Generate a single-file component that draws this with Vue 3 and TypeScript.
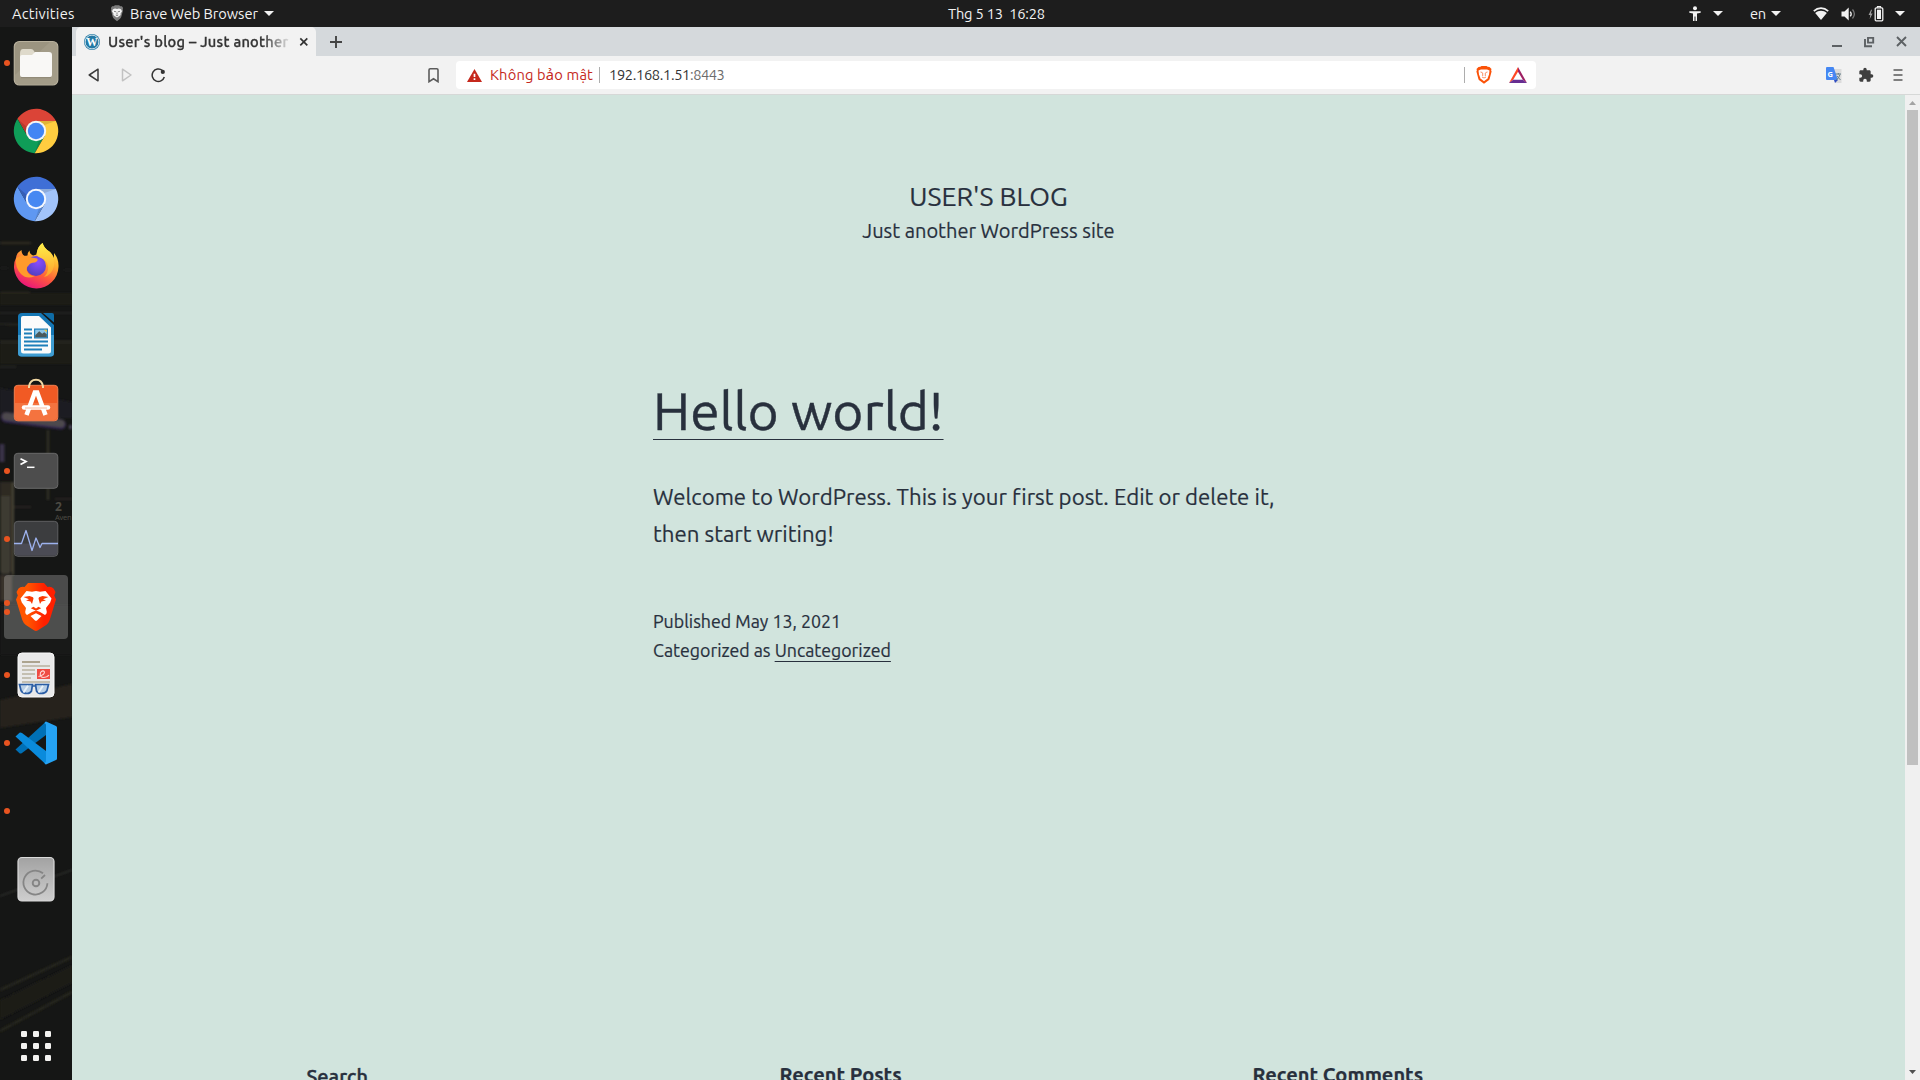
<script setup lang="ts">
interface DockItem {
  id: string
  dots: number
  active?: boolean
}

const dock: DockItem[] = [
  { id: 'files', dots: 1 },
  { id: 'chrome', dots: 0 },
  { id: 'chromium', dots: 0 },
  { id: 'firefox', dots: 0 },
  { id: 'writer', dots: 0 },
  { id: 'software', dots: 0 },
  { id: 'terminal', dots: 1 },
  { id: 'monitor', dots: 1 },
  { id: 'brave', dots: 2, active: true },
  { id: 'evince', dots: 1 },
  { id: 'vscode', dots: 1 },
  { id: 'unknown', dots: 1 },
  { id: 'disk', dots: 0 },
]

const appDots = [-15, -3, 9]
const clock = 'Thg 5 13\u00a0 16:28'
const widgets = [
  { title: 'Search', cls: 'search' },
  { title: 'Recent Posts', cls: 'posts' },
  { title: 'Recent Comments', cls: 'comments' },
]
</script>

<template>
  <div class="desktop">
    <header class="topbar">
      <span class="activities">Activities</span>
      <svg class="tb-brave" width="14" height="17" viewBox="0 0 14 17">
        <path d="M3.6 1.2 5 .3h4l1.400.9 1.500 0 1.200 1.900-.4 1.100.3 1.200-1.700 6.400c-.3 1-.8 1.700-1.600 2.300L7 16.300l-2.700-2.200c-.8-.6-1.300-1.300-1.600-2.300L1 5.400l.3-1.200L.9 3.100 2.100 1.200z" fill="#7d7d7d" />
        <path d="M3 4.200 5 3.500l2 .4 2-.4 2 .7 1 2-1.500 2.600.2 1.200-2 1.400L7 12.600l-1.700-1.200-2-1.400.2-1.200L2 6.200z" fill="#f4f4f4" />
        <path d="M4 6.300l2.200.5M10 6.300l-2.200.5M7 7.500v2M5.800 10 7 10.700l1.200-.7" stroke="#777" stroke-width=".9" fill="none" />
      </svg>
      <span class="appname">Brave Web Browser</span>
      <i class="caret app-caret"></i>
      <span class="clock">{{ clock }}</span>
      <div class="tray">
        <svg width="12" height="16" viewBox="0 0 12 16" class="t-access" fill="#f2f2f2">
          <circle cx="6" cy="2.300" r="2" />
          <path d="M.3 5.300h11.400v1.400L8 7.600V15H6.500v-4.500h-1V15H4V7.600L.3 6.700z" />
        </svg>
        <i class="caret"></i>
        <span class="lang">en</span>
        <i class="caret"></i>
        <svg width="16" height="14" viewBox="0 0 16 14" class="t-wifi">
          <path d="M.8 4.200C5 .2 11 .2 15.200 4.200" fill="none" stroke="#f2f2f2" stroke-width="1.700" />
          <path d="M2.200 5.900C5.500 2.900 10.500 2.900 13.800 5.900L8 13z" fill="#f2f2f2" />
        </svg>
        <svg width="16" height="14" viewBox="0 0 16 14" class="t-sound">
          <path d="M.5 4.500h3L7.700.5v13L3.500 9.500h-3z" fill="#f2f2f2" />
          <path d="M9.300 4.600q1.800 2.400 0 4.800" fill="none" stroke="#f2f2f2" stroke-width="1.300" />
          <path d="M11.500 2.500q3.800 4.500 0 9" fill="none" stroke="#777" stroke-width="1.300" />
        </svg>
        <svg width="16" height="16" viewBox="0 0 16 16" class="t-batt">
          <path d="M3.200 3.500 .6 9h1.700L1.700 13 4.600 7.500H2.800L3.900 4z" fill="#a0a0a0" />
          <path d="M9.500 1.700V.5h3v1.200" fill="none" stroke="#f2f2f2" stroke-width="1.200" />
          <rect x="7.200" y="1.900" width="7.600" height="12.900" rx="1" fill="none" stroke="#f2f2f2" stroke-width="1.300" />
          <rect x="9" y="3.700" width="4" height="9.300" fill="#f2f2f2" />
        </svg>
        <i class="caret"></i>
      </div>
    </header>

    <div class="workspace">
      <aside class="dock">
        <svg class="wall" width="72" height="1053" viewBox="0 27 72 1053">
          <defs>
            <filter id="soft"><feGaussianBlur stdDeviation="0.8" /></filter>
          </defs>
          <rect y="27" width="72" height="1053" fill="#151615" />
          <g filter="url(#soft)">
            <path d="M0 243h31M0 293h30" stroke="#3a3729" stroke-width="1.500" />
            <path d="M0 268h8M64 270h8" stroke="#232420" />
            <path d="M0 293h72v12H0zM0 340h72v24H0z" fill="#1b1b19" />
            <path d="M0 313h72M0 324l30 1M0 342h72M0 367h16" stroke="#34322a" />
            <path d="M0 388 72 402v16H0z" fill="#1f1e21" />
            <path d="M6 417.500 61 424.500" stroke="#33264f" stroke-width="10" stroke-linecap="round" />
            <path d="M6 416.500 61 423.500" stroke="#4d4a4e" stroke-width="7.500" stroke-linecap="round" />
            <path d="M69 427h3" stroke="#4a4356" stroke-width="4" />
            <path d="M48 430v70" stroke="#35332b" stroke-width="2" />
            <path d="M2 444v18" stroke="#373048" stroke-width="5" />
            <path d="M0 482h14v90H0z" fill="#2f2c23" />
            <path d="M1 496h9v78H1z" fill="#3d3a30" />
            <path d="M0 575h12v26H0z" fill="#383329" />
            <path d="M14 507h17M55 499h17" stroke="#37342c" />
            <path d="M13 482v93" stroke="#4a4436" stroke-width="2" />
            <path d="M0 605h72v50H0z" fill="#1c1b17" opacity=".8" />
            <path d="M0 700 72 684v33L0 728z" fill="#25231d" />
            <path d="M0 896 72 870" stroke="#3b3c38" />
            <path d="M0 990 72 957M0 1031 72 992" stroke="#2a2a22" stroke-width="2" />
            <path d="M0 1000 72 965v18L0 1020z" fill="#1a1a17" />
          </g>
          <text x="55" y="511" class="wall-num">2</text>
          <text x="55" y="520" class="wall-name">Aven</text>
        </svg>
        <div class="dock-items">
          <div v-for="it in dock" :key="it.id" class="dock-item" :class="{ active: it.active }">
            <div class="dots"><i v-for="n in it.dots" :key="n"></i></div>
            <svg width="72" height="68" viewBox="-36 -34 72 68">
              <template v-if="it.id === 'files'">
                <rect x="-21.700" y="-21.500" width="43.500" height="43.500" rx="5" fill="#9b9480" stroke="#b7b09c" stroke-width="1.200" />
                <path d="M-21 12 14-21h4q3 0 3 3v36q0 3-3 3h-36q-3 0-3-3z" fill="#a9a28e" opacity=".6" />
                <path d="M-16-9q0-5 3-5h8q2 0 3 2l1 2h13v10h-28z" fill="#dfdacb" />
                <path d="M-16-6q0-2 2-2h10l3-3h14q3 0 3 3v20q0 2-2 2h-28q-2 0-2-2z" fill="#f9f8f6" />
                <path d="M-15 14.700h30" stroke="#827b69" stroke-width="1" opacity=".6" />
              </template>
              <template v-else-if="it.id === 'chrome' || it.id === 'chromium'">
                <g :class="it.id">
                  <path class="a" d="M0-10H19.900A22.300 22.300 0 0 0-18.600-12.200L-8.660 5Z" />
                  <path class="b" d="M-8.660 5-18.600-12.200A22.300 22.300 0 0 0-1.290 22.200L8.660 5Z" />
                  <path class="c" d="M8.660 5-1.290 22.200A22.300 22.300 0 0 0 19.900-10H0Z" />
                  <path d="M0-10H19.900L8.500-6z" fill="#000" opacity=".12" />
                  <path d="M-8.660 5-18.600-12.200-9-4z" fill="#000" opacity=".15" />
                  <path d="M8.660 5-1.290 22.200 3 9z" fill="#000" opacity=".12" />
                  <circle r="10.200" class="ring" />
                  <circle r="8.200" class="core" />
                </g>
              </template>
              <template v-else-if="it.id === 'firefox'">
                <defs>
                  <linearGradient id="ff1" x1=".8" y1="0" x2=".3" y2="1">
                    <stop offset="0" stop-color="#fff44f" /><stop offset=".35" stop-color="#ffb02e" />
                    <stop offset=".65" stop-color="#ff5a3c" /><stop offset="1" stop-color="#e8117f" />
                  </linearGradient>
                  <radialGradient id="ff2" cx=".6" cy=".3" r=".8">
                    <stop offset="0" stop-color="#8b4bff" /><stop offset="1" stop-color="#4a3fb8" />
                  </radialGradient>
                  <linearGradient id="ff3" x1="0" y1="0" x2="0" y2="1">
                    <stop offset="0" stop-color="#fff04a" /><stop offset="1" stop-color="#ffa12b" />
                  </linearGradient>
                </defs>
                <path d="M-14.500-17q0 4 3 6l3-.5q0-3 2-5 0 4 4 5l3-1q1-8 6-11.500 2 6 7.500 9 3 3 4 6l0-5q5 6 4.500 14A22.300 22.300 0 0 1-22 1q-.3-6 2-10 .3-5 5.500-8z" fill="url(#ff1)" />
                <circle cx="0" cy="-1" r="10" fill="url(#ff2)" />
                <path d="M.5-12.500q1-8 6-11.500 2 6 7.500 9 5 6 4 14-2 9-10 11 5-5 4-11-1-6-7-8-3-1-4.500-3.500z" fill="url(#ff3)" />
                <path d="M-20-9q7-4 13-1l8 1.500q2 2-2 4-5 0-6 2.500-3 2-2 6 2 5 8 5-8 4-14-2-6-6-5-16z" fill="#ff9a2b" />
              </template>
              <template v-else-if="it.id === 'writer'">
                <path d="M-14-22H5L18-10V18q0 3.500-3.500 3.500h-29Q-18 21.500-18 18v-36.500Q-18-22-14-22z" fill="#1577b5" />
                <path d="M-18 0h36v18q0 3.500-3.500 3.500h-29Q-18 21.500-18 18z" fill="#3f9dd2" />
                <path d="M-13-19H3L15-7.500V16q0 2.500-2.500 2.500h-25Q-15 18.500-15 16v-33q0-2 2-2z" fill="#fbfbfb" />
                <path d="M7-22H16q2 0 2 2v7.500z" fill="#0f6ca6" />
                <path d="M-12-5.500h8M-12-1.500h8M-12 2.500h8M-12 6.500h24M-12 10.500h24M-12 14.500h18" stroke="#1d7fba" stroke-width="1.900" />
                <rect x="-2" y="-6.500" width="14" height="10" fill="#1d7fba" />
                <rect x="-.8" y="-5.300" width="11.600" height="7.600" fill="#8cc6e8" />
                <path d="M-.8 2.300v-2l4-4 3 2.500 2-1.500 2.600 2v3z" fill="#4a5a5c" />
                <path d="M8-5.300h2.800v2.800z" fill="#f4c631" />
              </template>
              <template v-else-if="it.id === 'software'">
                <rect x="-21.700" y="-17.700" width="43.500" height="35.500" rx="3.500" fill="#f15a24" stroke="#f4804f" />
                <path d="M-21 0h42v14q0 3-3 3h-36q-3 0-3-3z" fill="#f4733f" />
                <path d="M-7-15v-1.500Q-6-23.300 0-23.300T7-16.500V-15" fill="none" stroke="#f3d9a4" stroke-width="2" />
                <path d="M-9.500 12-1.200-10.500h2.400L9.500 12" fill="none" stroke="#fff" stroke-width="4.500" />
                <path d="M-12 4.500h24" stroke="#fff" stroke-width="4.500" stroke-linecap="round" />
                <path d="M-11 5h22" stroke="#f7a98a" stroke-width=".8" />
              </template>
              <template v-else-if="it.id === 'terminal'">
                <rect x="-21.700" y="-17.700" width="43.500" height="35" rx="3.500" fill="#4d4d4d" stroke="#696969" />
                <path d="M-15.500-12.300-10-9.500-15.500-6.500" fill="none" stroke="#fff" stroke-width="1.800" />
                <path d="M-9-3.700h7.500" stroke="#fff" stroke-width="1.500" />
              </template>
              <template v-else-if="it.id === 'monitor'">
                <rect x="-21.700" y="-17.700" width="43.500" height="35" rx="3.500" fill="#3c3d3f" stroke="#5f6062" />
                <path d="M-21 4.500h42v9q0 3-3 3h-36q-3 0-3-3z" fill="#4b4b54" />
                <path d="M-22 4.500h7.500L-10-8.500-4 11.500 0-1 4 8.500 6 4.500h16" fill="none" stroke="#9db2ee" stroke-width="1.300" stroke-linejoin="round" />
              </template>
              <template v-else-if="it.id === 'brave'">
                <defs>
                  <linearGradient id="br" x1="0" x2="1"><stop offset=".3" stop-color="#ff5500" /><stop offset=".7" stop-color="#ff2000" /></linearGradient>
                </defs>
                <path d="M-11.500-20-8-24H8l3.500 4q4-.7 6 1.500L19.500-15l-1.300 3.500L20-7.500 13.700 13q-1 3-3.500 5L2 23.300Q0 24.600-2 23.300L-10.200 18q-2.500-2-3.500-5L-20-7.500l1.800-4L-19.500-15l2-3.500q2-2.200 6-1.500z" fill="url(#br)" />
                <path d="M-9.500-16-4-15.200 0-16 4-15.200 9.500-16 15.500-8.500l-1.300 4L10 1l.8 4q0 2-1.800 3L4 5 0 3.500-4 5l-5 3q-1.800-1-1.800-3L-10 1l-4.200-5.500-1.300-4z" fill="#fff" />
                <path d="M-5.500 9 0 6.300 5.500 9 1 13.400q-1 .8-2 0z" fill="#fff" />
                <path d="M-12.500-10-6.500-11-3-9.800-2.500-8.500-4-3-5.500-5.500-10-6.500-7-7.800zM12.500-10 6.500-11 3-9.800 2.500-8.500 4-3 5.500-5.500 10-6.500 7-7.800z" fill="#fb3a05" />
                <path d="M-5.200 1.300-2.500-.2 0 1.500 2.500-.2 5.200 1.300 0 3.800z" fill="#fb3a05" />
              </template>
              <template v-else-if="it.id === 'evince'">
                <rect x="-18" y="-22" width="36" height="44" rx="4" fill="#e9e9e9" stroke="#fafafa" />
                <path d="M-14-13H4" stroke="#aca48f" stroke-width="2" />
                <path d="M-14-9h28M-14-5h13M-14-1h13M-14 3h9M-14 7h28" stroke="#c4bfb1" stroke-width="1.900" />
                <rect x="1" y="-6" width="13" height="10" fill="#ef4c43" />
                <path d="M2.500 1.500Q8.500 0 8.500-3 7-5.500 4.500-2.500 3.500 2 7 2.500q4 0 6-2.500" fill="none" stroke="#ffd9d5" stroke-width="1.100" />
                <path d="M-16.500 9.500H-3.500L-4.500 16Q-6 18.500-9 18.500-13.500 18.500-15 15.500zM12.500 9.500H-.5L.5 16Q2 18.500 5 18.500 9.500 18.500 11 15.500zM-3.500 11H-.5" fill="#b9cfe6" stroke="#2a5da5" stroke-width="1.700" />
                <path d="M-12.500 17.500-8 10.800M2.500 17.500 7 10.800" stroke="#e9f1f8" stroke-width="2" />
              </template>
              <template v-else-if="it.id === 'vscode'">
                <path d="M-20.500 6.500-16.500 10.300Q-15.500 11-14 10L10-8V-21.500z" fill="#0070b6" />
                <path d="M-20.500-6.500-16.500-10.300Q-15.500-11-14-10L10 8V21.500z" fill="#0a8bdc" />
                <path d="M10-21.500 20-17q1 .5 1 1.600V15.400q0 1.100-1 1.600L10 21.500Q8.500 21 8.500 19.500 10 20 10 18V-18Q10-20 8.500-19.500 8.500-21 10-21.500z" fill="#25a3f4" />
              </template>
              <template v-else-if="it.id === 'disk'">
                <defs>
                  <linearGradient id="dk" x1="0" x2="0" y1="0" y2="1"><stop offset="0" stop-color="#a2a2a2" /><stop offset="1" stop-color="#cecece" /></linearGradient>
                </defs>
                <rect x="-18" y="-21.500" width="36" height="43.500" rx="4" fill="url(#dk)" stroke="#dadada" stroke-width="1.200" />
                <path d="M11.400.3A12 12 0 1 1 7-9.700" transform="translate(0 4)" fill="none" stroke="#858585" stroke-width="1.800" />
                <path d="M5.200-.3 9-4" stroke="#858585" stroke-width="1.800" />
                <circle cx="0" cy="4" r="3.300" fill="none" stroke="#858585" stroke-width="1.900" />
              </template>
            </svg>
          </div>
        </div>
        <svg class="apps" width="72" height="68" viewBox="-36 -34 72 68" fill="#f4f3f1">
          <template v-for="y in appDots" :key="y">
            <rect v-for="x in appDots" :key="x" :x="x" :y="y" width="6" height="6" rx="1.200" />
          </template>
        </svg>
      </aside>

      <section class="browser">
        <div class="tabstrip">
          <div class="tab">
            <svg class="wp" width="16" height="16" viewBox="0 0 16 16">
              <circle cx="8" cy="8" r="8" fill="#2379a4" />
              <circle cx="8" cy="8" r="6.900" fill="none" stroke="#fff" stroke-width=".8" />
              <text x="8" y="12.300" text-anchor="middle" class="wp-w">W</text>
            </svg>
            <span class="tab-title">User's blog – Just another</span>
            <svg class="tab-close" width="10" height="10" viewBox="0 0 10 10"><path d="M1.300 1.300l7 7M8.300 1.300l-7 7" stroke="#333" stroke-width="1.700" /></svg>
          </div>
          <svg class="newtab" width="14" height="14" viewBox="0 0 14 14"><path d="M7 1v12M1 7h12" stroke="#444" stroke-width="1.900" /></svg>
          <div class="winbtns">
            <svg width="10" height="12" viewBox="0 0 10 12"><path d="M0 10h10" stroke="#5d6164" stroke-width="2" /></svg>
            <svg width="12" height="12" viewBox="0 0 12 12"><path d="M5 1.900h5.200v4.700H5z" fill="none" stroke="#5d6164" stroke-width="1.900" /><path d="M2 3v7.200h7" fill="none" stroke="#5d6164" stroke-width="1.900" /></svg>
            <svg width="11" height="11" viewBox="0 0 11 11"><path d="M1 1l9 9M10 1l-9 9" stroke="#5d6164" stroke-width="1.900" /></svg>
          </div>
        </div>

        <div class="toolbar">
          <svg class="back" width="12" height="14" viewBox="0 0 12 14"><path d="M10 1.200v11.600L1.200 7z" fill="none" stroke="#3b3b3b" stroke-width="1.500" stroke-linejoin="round" /></svg>
          <svg class="fwd" width="12" height="14" viewBox="0 0 12 14"><path d="M1.500 1.200v11.600L10 7z" fill="none" stroke="#c2c2c2" stroke-width="1.500" stroke-linejoin="round" /></svg>
          <svg class="reload" width="15" height="15" viewBox="0 0 15 15"><path d="M11.300 2.400A6.200 6.200 0 1 0 13.300 9" fill="none" stroke="#333" stroke-width="1.500" /><circle cx="11.800" cy="3.900" r="2.100" fill="#333" /></svg>
          <svg class="bookmark" width="11" height="15" viewBox="0 0 11 15"><path d="M1 2q0-1.200 1.200-1.200h6.600Q10 .8 10 2v11.700L5.500 10.800 1 13.700z" fill="none" stroke="#5c5c5c" stroke-width="1.600" /></svg>
          <div class="address">
            <svg class="warn" width="15" height="13" viewBox="0 0 15 13"><path d="M7.500 0 15 13H0z" fill="#c5281c" /><path d="M7.500 4.700v3.300M7.500 9.300v1.700" stroke="#fff" stroke-width="1.700" /></svg>
            <span class="insecure">Không bảo mật</span>
            <i class="sep"></i>
            <span class="host">192.168.1.51</span><span class="port">:8443</span>
            <i class="sep right"></i>
            <svg class="shield" width="16" height="18" viewBox="0 0 16 18">
              <path d="M4.300.8 5.500 0h5l1.200.8 1.800.2L15.500 3l-.4 1.300.5 1.200-2 7.400q-.3 1-1.200 1.700L8 17.800 3.600 14.600q-.9-.7-1.200-1.700L.4 5.500l.5-1.200L.5 3l2-2z" fill="#fb5208" />
              <path d="M2.500 4.500 5 3.500h6l2.500 1-.5 4-1.500 4L8 15.300 4.500 12.500 3 8.500z" fill="#fff" />
              <path d="M4.500 6l2 .6M11.500 6l-2 .6M6.700 7v3M9.300 7v3M6 11l2 1 2-1" fill="none" stroke="#f98555" stroke-width=".9" />
            </svg>
            <svg class="bat" width="18" height="16" viewBox="0 0 18 16">
              <path d="M9 0 0 16 4.200 12.800 9 4.800z" fill="#ff4724" />
              <path d="M9 0 18 16 13.800 12.800 9 4.800z" fill="#9e1f63" />
              <path d="M0 16h18l-4.200-3.200H4.200z" fill="#662d91" />
            </svg>
          </div>
          <div class="ext">
            <svg width="16" height="16" viewBox="0 0 16 16">
              <path d="M7 2h8.500v14H9.500z" fill="#dcdcdc" />
              <path d="M0 1q0-1 1-1h6.500L12 13H1q-1 0-1-1z" fill="#4587f3" />
              <path d="M8 13h4l-3 3z" fill="#2f4dc2" />
              <text x="1.600" y="9.700" class="g">G</text>
              <path d="M9.500 7h5.500M12.300 6v1.500M14 7.500q-1 4-4 5.500M11 9l3.500 4" fill="none" stroke="#67808b" stroke-width="1" />
            </svg>
            <svg width="16" height="16" viewBox="0 0 24 24"><path fill="#3f3f3f" d="M20.500 11H19V7c0-1.100-.9-2-2-2h-4V3.500a2.500 2.500 0 0 0-5 0V5H4c-1.100 0-2 .9-2 2v3.800h1.500a2.700 2.700 0 0 1 0 5.400H2V20c0 1.100.9 2 2 2h3.800v-1.500a2.700 2.700 0 0 1 5.400 0V22H17c1.100 0 2-.9 2-2v-4h1.500a2.500 2.500 0 0 0 0-5z" /></svg>
            <svg width="10" height="12" viewBox="0 0 10 12"><path d="M.5 1h9M.5 6h9M.5 11h9" stroke="#5a5a5a" stroke-width="1.700" /></svg>
          </div>
        </div>

        <div class="viewport">
          <main class="page">
            <div class="site-title">USER'S BLOG</div>
            <div class="site-desc">Just another WordPress site</div>
            <article>
              <h2><a>Hello world!</a></h2>
              <p class="excerpt">
                Welcome to WordPress. This is your first post. Edit or delete it,<br />
                then start writing!
              </p>
              <div class="meta">
                <div>Published May 13, 2021</div>
                <div>Categorized as <a>Uncategorized</a></div>
              </div>
            </article>
            <footer>
              <h3 v-for="w in widgets" :key="w.title" :class="w.cls">{{ w.title }}</h3>
            </footer>
          </main>
          <div class="scrollbar">
            <svg width="7" height="4" viewBox="0 0 7 4"><path d="M0 4h7L3.500 0z" fill="#a3a3a3" /></svg>
            <div class="thumb"></div>
            <svg class="down" width="7" height="4" viewBox="0 0 7 4"><path d="M0 0h7L3.500 4z" fill="#505050" /></svg>
          </div>
        </div>
      </section>
    </div>
  </div>
</template>

<style>
html, body { margin: 0; overflow: hidden; }
</style>

<style scoped>
* { box-sizing: border-box; }
svg { display: block; flex: none; }
.desktop {
  width: 1920px; height: 1080px; overflow: hidden;
  display: flex; flex-direction: column;
  font-family: Ubuntu, 'Noto Sans', 'Open Sans', sans-serif;
  font-size: 14.667px;
}
.topbar {
  position: relative; flex: none; height: 27px; background: #1d1d1d; color: #f2f2f2;
  display: flex; align-items: center; white-space: pre; line-height: 27px;
}
.activities { margin-left: 12px; width: 62px; letter-spacing: .25px; }
.tb-brave { margin-left: 36px; margin-top: -1px; }
.appname { margin-left: 6px; width: 130px; letter-spacing: -.07px; }
.caret { display: block; flex: none; width: 0; height: 0; border: 5px solid transparent; border-top-color: #f2f2f2; border-bottom: 0; }
.app-caret { margin-left: 4px; }
.clock { position: absolute; left: 948px; letter-spacing: -.2px; }
.tray { margin-left: auto; margin-right: 15px; display: flex; align-items: center; }
.t-access { margin-right: 12px; }
.lang { margin-left: 27px; width: 17px; margin-right: 4px; letter-spacing: -.3px; }
.t-wifi { margin-left: 32px; }
.t-sound { margin-left: 12px; }
.t-batt { margin: 0 11px 0 11px; }

.workspace { flex: 1; min-height: 0; display: flex; }
.dock { position: relative; width: 72px; flex: none; background: #151615; display: flex; flex-direction: column; }
.wall { position: absolute; left: 0; top: 0; }
.wall-num { font: 700 12px 'Noto Sans', sans-serif; fill: #4c4a43; }
.wall-name { font: 7.500px 'Noto Sans', sans-serif; fill: #4c4a43; letter-spacing: -.3px; }
.dock-items { position: relative; padding-top: 2px; }
.dock-item { position: relative; height: 68px; }
.dock-item.active::before { content: ''; position: absolute; left: 4px; top: 2px; width: 64px; height: 64px; border-radius: 4px; background: rgba(255, 255, 255, .23); }
.dock-item > svg { position: relative; }
.dots { position: absolute; left: 4px; top: 0; height: 68px; display: flex; flex-direction: column; justify-content: center; gap: 3px; z-index: 1; }
.dots i { width: 6px; height: 6px; border-radius: 50%; background: #e95420; }
.chrome .a { fill: #db4437; } .chrome .b { fill: #0f9d58; } .chrome .c { fill: #ffcd40; }
.chrome .ring { fill: #f5f5f5; } .chrome .core { fill: #4285f4; }
.chromium .a { fill: #3f6fd6; } .chromium .b { fill: #5f98f2; } .chromium .c { fill: #a2c4fa; }
.chromium .ring { fill: #f5f8fe; } .chromium .core { fill: #4688f2; }
.apps { position: relative; margin-top: auto; }

.browser { flex: 1; min-width: 0; display: flex; flex-direction: column; }
.tabstrip { height: 29px; flex: none; background: #d5d9dc; display: flex; align-items: center; }
.tab {
  align-self: flex-end; margin-left: 4px; width: 240px; height: 29px; background: #f2f2f2;
  border-radius: 5px 5px 0 0; display: flex; align-items: center;
}
.wp { margin-left: 8px; }
.wp-w { font: 700 11.500px 'Liberation Serif', serif; fill: #fff; }
.tab-title {
  margin-left: 8px; width: 181px; overflow: hidden; white-space: nowrap; font-weight: 500; color: #333;
  letter-spacing: .27px; line-height: 28px; -webkit-text-stroke: .3px #333;
  -webkit-mask-image: linear-gradient(90deg, #000 155px, transparent 184px);
  mask-image: linear-gradient(90deg, #000 155px, transparent 184px);
}
.tab-close { margin-left: 10px; }
.newtab { margin-left: 13px; }
.winbtns { margin-left: auto; margin-right: 13px; display: flex; align-items: center; gap: 22px; }
.winbtns svg:nth-child(1) { margin-right: -1px; }
.winbtns svg:nth-child(2) { margin-right: -1px; }
.toolbar { height: 39px; flex: none; background: #f2f2f2; border-bottom: 1px solid #d6d8d7; display: flex; align-items: center; }
.back { margin-left: 16px; }
.fwd { margin-left: 21px; }
.reload { margin-left: 18px; }
.bookmark { margin-left: 262px; }
.address { margin-left: 17px; width: 1080px; height: 28px; background: #fff; border-radius: 4px; display: flex; align-items: center; line-height: 28px; white-space: nowrap; }
.warn { margin-left: 11px; }
.insecure { margin-left: 8px; width: 102px; color: #c5281c; letter-spacing: .18px; }
.sep { width: 1px; height: 16px; background: #adadad; margin-left: 7px; }
.host { margin-left: 9px; letter-spacing: -.35px; color: #333; }
.port { letter-spacing: -.45px; color: #6c6c6c; }
.right { margin-left: auto; }
.shield { margin-left: 11px; }
.bat { margin: 0 9px 0 17px; }
.ext { margin-left: auto; margin-right: 17px; display: flex; align-items: center; gap: 17px; }
.ext svg:nth-child(1) { margin-right: -1px; }
.ext svg:nth-child(3) { margin-left: 2px; }
.g { font: 700 7.500px 'Noto Sans', sans-serif; fill: #fff; }

.viewport { flex: 1; min-height: 0; display: flex; background: #d1e4dd; color: #28303d; }
.page { flex: 1; min-width: 0; height: 985px; overflow: hidden; display: flex; flex-direction: column; white-space: nowrap; -webkit-text-stroke: .2px #28303d; }
.site-title { margin-top: 84px; height: 34px; line-height: 34px; text-align: center; font-size: 26.667px; }
.site-desc { height: 35px; line-height: 36px; text-align: center; font-size: 20px; }
article { width: 671px; margin: 128px auto 0; }
h2 { margin: 0; font-size: 53.333px; line-height: 68px; font-weight: 400; height: 68px; -webkit-text-stroke: .4px #28303d; }
h2 a { text-decoration: underline; text-decoration-thickness: 1px; text-underline-offset: 9px; text-decoration-skip-ink: none; }
.excerpt { margin: 34px 0 0; font-size: 22.222px; line-height: 37px; letter-spacing: .015px; }
.meta { margin-top: 55px; font-size: 17.778px; line-height: 29.300px; }
.meta a { text-decoration: underline; text-decoration-thickness: 1px; text-underline-offset: 4px; text-decoration-skip-ink: none; }
footer { width: 1366px; margin: auto auto 0; height: 19px; display: grid; grid-template-columns: repeat(3, 1fr); column-gap: 53px; }
h3 { margin: 0; height: 28px; line-height: 28px; font-size: 20px; font-weight: 700; padding-left: 1px; }
h3.search { margin-top: 2px; font-weight: 500; -webkit-text-stroke: .45px #28303d; }
.scrollbar { width: 15px; flex: none; background: #f0f0f0; display: flex; flex-direction: column; align-items: center; padding: 6px 0; }
.thumb { width: 11px; height: 655px; margin-top: 5px; background: #c0c0c0; }
.down { margin-top: auto; }
</style>
